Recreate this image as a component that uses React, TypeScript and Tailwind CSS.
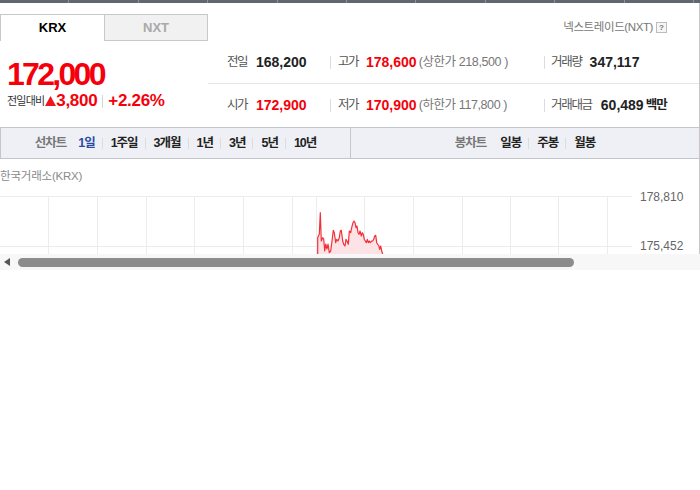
import React from 'react';

const pts: [number, number][] = [
  [317.7, 270], [317.7, 236.7], [319.3, 233], [320.3, 211.7], [321.3, 240], [322.7, 236.7],
  [323.7, 238], [324.7, 250], [325.7, 243], [327, 248], [328, 243], [329.3, 251.7],
  [330.7, 250], [332, 240], [333.3, 229.3], [334.3, 231.7], [335.7, 241.7], [336.7, 238.3],
  [338, 240], [339.3, 236.7], [340.3, 230], [341.3, 229.3], [342.7, 240], [343.7, 243.3],
  [345, 245], [346, 238.3], [347, 240], [348.3, 243.3], [349.3, 230], [350.7, 231.7],
  [351.7, 226.7], [353, 221.7], [354, 220], [355, 221.7], [356, 226.7], [357, 225],
  [358, 231.7], [359, 233.3], [360, 230], [361.3, 235], [362.3, 231.7], [363.3, 233.3],
  [364.3, 238.3], [365.3, 240], [366.3, 241.7], [367.3, 238.3], [368.3, 241.7], [369.3, 240],
  [370.3, 241.7], [371.7, 240], [372.7, 240], [373.7, 238.3], [374.7, 235], [375.7, 234.3],
  [376.7, 241.7], [377.7, 243.3], [378.7, 244.3], [379.7, 248.3], [380.7, 245], [381.7, 250],
  [382.7, 253.3], [384, 258], [385, 262],
];

const vLines = [48, 97, 146, 194, 243, 292, 316, 364, 413, 462, 510, 558, 607];

const lineTabs = ['1주일', '3개월', '1년', '3년', '5년', '10년'];
const candleTabs = ['주봉', '월봉'];

function Sep({ h = 'h-[11px]' }: { h?: string }) {
  return <span className={`inline-block w-px ${h} bg-[#dcdcdc] shrink-0`} />;
}

function Chart() {
  const line = pts.map(([x, y], i) => `${i ? 'L' : 'M'}${x},${(y - 185).toFixed(1)}`).join(' ');
  const area = `${line} L385,90 L317.7,90 Z`;
  return (
    <svg width="632" height="68" viewBox="0 0 632 68" className="shrink-0">
      <line x1="0" y1="10.5" x2="632" y2="10.5" stroke="#ececec" />
      <line x1="0" y1="60.5" x2="632" y2="60.5" stroke="#ececec" />
      {vLines.map((x) => (
        <line key={x} x1={x + 0.5} y1="10" x2={x + 0.5} y2="68" stroke="#ececec" />
      ))}
      <path d={area} fill="#fde3e5" />
      <path d={line} fill="none" stroke="#f2303a" strokeWidth="1.2" strokeLinejoin="round" />
    </svg>
  );
}

export default function App() {
  return (
    <div className="w-[700px] bg-white font-[family-name:'Liberation_Sans','Noto_Sans_CJK_KR',sans-serif] text-[#222]">
      {/* top strip */}
      <div className="h-[3px] bg-[#606771] flex overflow-hidden">
        {Array.from({ length: 11 }).map((_, i) => (
          <div key={i} className="shrink-0 w-[69.4px] h-full border-r border-[#8d939c]" />
        ))}
      </div>

      <div className="border-r border-[#c6c6c6]">
        {/* market tabs */}
        <div className="flex justify-between pt-[11px]">
          <div className="flex h-[27px]">
            <div className="w-[104px] border-l border-t border-[#c8c8c8] flex items-center justify-center text-[13px] font-bold text-black">
              KRX
            </div>
            <div className="w-[104px] border border-[#c8c8c8] bg-[#f1f1f1] flex items-center justify-center text-[13px] font-bold text-[#a9a9a9]">
              NXT
            </div>
          </div>
          <div className="flex items-center pr-[32px] gap-[3px]">
            <span className="text-[11.5px] tracking-[-0.4px] text-[#777]">넥스트레이드(NXT)</span>
            <span className="w-[11px] h-[11px] border border-[#bdbdbd] bg-[#f6f6f6] flex items-center justify-center text-[8px] leading-none font-bold text-[#777]">
              ?
            </span>
          </div>
        </div>

        {/* price + info */}
        <div className="flex h-[86px]">
          <div className="w-[208px] pl-[7px]">
            <div className="mt-[17px] text-[32px] leading-[32px] font-bold tracking-[-2.7px] text-[#f5000a]">
              172,000
            </div>
            <div className="mt-[2px] h-[18px] flex items-center">
              <span className="text-[11px] tracking-[-0.8px] text-[#333]">전일대비</span>
              <svg width="11" height="10" viewBox="0 0 11 10" className="ml-[1px]">
                <path d="M5.5 0 L11 10 L0 10 Z" fill="#f0141e" />
              </svg>
              <span className="text-[17px] font-bold tracking-[-0.3px] text-[#f5000a]">3,800</span>
              <span className="mx-[5px] w-px h-[13px] bg-[#d5d5d5]" />
              <span className="text-[17px] font-bold tracking-[-0.3px] text-[#f5000a]">+2.26%</span>
            </div>
          </div>

          <div className="flex-1 flex flex-col">
            <div className="h-[43px] flex items-center border-b border-[#e6e6e6]">
              <div className="w-[122px] pl-[19px] flex items-center gap-[9px]">
                <span className="text-[12.5px] tracking-[-1.5px] text-[#555]">전일</span>
                <span className="text-[14px] font-bold">168,200</span>
              </div>
              <div className="w-[214px] flex items-center">
                <Sep h="h-[13px]" />
                <span className="ml-[7px] text-[12.5px] tracking-[-1.5px] text-[#555]">고가</span>
                <span className="ml-[8px] text-[14px] font-bold text-[#f5000a]">178,600</span>
                <span className="ml-[2px] text-[12.5px] tracking-[-0.4px] text-[#777]">(상한가 218,500 )</span>
              </div>
              <div className="flex-1 flex items-center">
                <Sep h="h-[13px]" />
                <span className="ml-[6px] text-[12.5px] tracking-[-1.3px] text-[#555]">거래량</span>
                <span className="ml-[8px] text-[14px] font-bold">347,117</span>
              </div>
            </div>
            <div className="flex-1 flex items-center">
              <div className="w-[122px] pl-[19px] flex items-center gap-[9px]">
                <span className="text-[12.5px] tracking-[-1.5px] text-[#555]">시가</span>
                <span className="text-[14px] font-bold text-[#f5000a]">172,900</span>
              </div>
              <div className="w-[214px] flex items-center">
                <Sep h="h-[13px]" />
                <span className="ml-[7px] text-[12.5px] tracking-[-1.5px] text-[#555]">저가</span>
                <span className="ml-[8px] text-[14px] font-bold text-[#f5000a]">170,900</span>
                <span className="ml-[2px] text-[12.5px] tracking-[-0.4px] text-[#777]">(하한가 117,800 )</span>
              </div>
              <div className="flex-1 flex items-center">
                <Sep h="h-[13px]" />
                <span className="ml-[6px] text-[12.5px] tracking-[-1.3px] text-[#555]">거래대금</span>
                <span className="ml-[9px] text-[14px] font-bold">60,489</span>
                <span className="ml-[2px] text-[12.5px] font-bold tracking-[-1px]">백만</span>
              </div>
            </div>
          </div>
        </div>

        {/* chart period tabs */}
        <div className="h-[32px] flex border-y border-l border-[#c5c6cc] bg-[#eff0f5] text-[12.5px] font-bold tracking-[-1px]">
          <div className="w-[350px] border-r border-[#c5c6cc] flex items-center justify-center">
            <span className="text-[#777]">선차트</span>
            <span className="ml-[12px] text-[#2c4c9e]">1일</span>
            {lineTabs.map((t) => (
              <React.Fragment key={t}>
                <span className="ml-[7px] mr-[8px] flex"><Sep /></span>
                <span className="text-[#222]">{t}</span>
              </React.Fragment>
            ))}
          </div>
          <div className="flex-1 flex items-center justify-center">
            <span className="text-[#777]">봉차트</span>
            <span className="ml-[14px] text-[#222]">일봉</span>
            {candleTabs.map((t) => (
              <React.Fragment key={t}>
                <span className="ml-[7px] mr-[8px] flex"><Sep /></span>
                <span className="text-[#222]">{t}</span>
              </React.Fragment>
            ))}
          </div>
        </div>

        <div className="h-[27px] pt-[8px] flex items-center text-[11.5px] text-[#8a8a8a] tracking-[-0.2px]">
          한국거래소(KRX)
        </div>

        {/* chart */}
        <div className="h-[68px] overflow-hidden flex">
          <Chart />
          <div className="pl-[8px] flex flex-col text-[12px] leading-[14px] text-[#666]">
            <span className="mt-[4px]">178,810</span>
            <span className="mt-[35px]">175,452</span>
          </div>
        </div>
      </div>

      {/* horizontal scrollbar */}
      <div className="h-[16px] bg-[#f7f7f7] flex items-center">
        <svg width="6" height="8" viewBox="0 0 6 8" className="ml-[4px]">
          <path d="M0 4 L6 0 L6 8 Z" fill="#555" />
        </svg>
        <div className="ml-[8px] w-[556px] h-[9px] rounded-full bg-[#8c8c8c]" />
      </div>
    </div>
  );
}
